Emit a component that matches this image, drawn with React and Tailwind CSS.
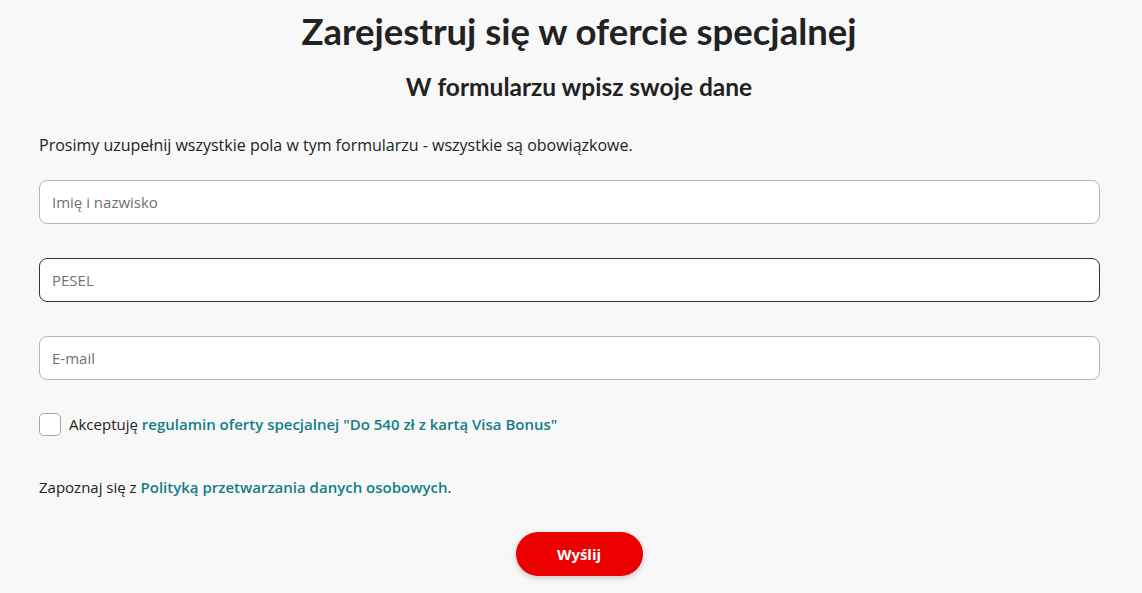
import React from 'react';

const body = { fontFamily: '"Open Sans", Lato, sans-serif' };
const heading = { fontFamily: 'Lato, "Open Sans", sans-serif' };

const Field = ({ placeholder, active }) => (
  <input
    type="text"
    placeholder={placeholder}
    className={
      'w-full h-11 rounded-lg bg-white px-3 text-[15px] text-[#222] placeholder:text-[#73706e] outline-none border ' +
      (active ? 'border-[#333]' : 'border-[#b5b5b5]')
    }
  />
);

export default function App() {
  return (
    <div className="min-h-[593px] bg-[#f8f8f8] text-[#222]" style={body}>
      <div className="px-[39px] pt-[9px]">
        {/* headings and button sit a bit right of the form's center */}
        <div className="pl-[16px]">
          <h1 className="text-center text-[36.5px] font-bold leading-[44px] text-[#222]" style={heading}>
            Zarejestruj się w ofercie specjalnej
          </h1>
          <h2 className="mt-[19px] text-center text-[24.5px] font-bold leading-[30px] text-[#222]" style={heading}>
            W formularzu wpisz swoje dane
          </h2>
        </div>

        <p className="mt-[33px] text-[16px] leading-5">
          Prosimy uzupełnij wszystkie pola w tym formularzu - wszystkie są obowiązkowe.
        </p>

        <div className="mt-[25px] flex flex-col gap-[34px] w-[1061px]">
          <Field placeholder="Imię i nazwisko" />
          <Field placeholder="PESEL" active />
          <Field placeholder="E-mail" />
        </div>

        <label className="mt-[33px] flex items-center gap-[8px] text-[15px]">
          <span className="w-[22px] h-[23px] rounded-[5px] border border-[#a5a5a5] bg-white" />
          <span>
            Akceptuję{' '}
            <a className="font-semibold text-[#137e84]">
              regulamin oferty specjalnej "Do 540 zł z kartą Visa Bonus"
            </a>
          </span>
        </label>

        <p className="mt-[41px] text-[15px] leading-5">
          Zapoznaj się z{' '}
          <a className="font-semibold text-[#137e84]">Polityką przetwarzania danych osobowych</a>.
        </p>

        <div className="mt-[35px] pl-[16px] flex justify-center">
          <button className="w-[127px] h-11 rounded-full bg-[#ec0000] text-white text-[15px] font-bold shadow-[0_2px_6px_rgba(0,0,0,0.2)]">
            Wyślij
          </button>
        </div>
      </div>
    </div>
  );
}
